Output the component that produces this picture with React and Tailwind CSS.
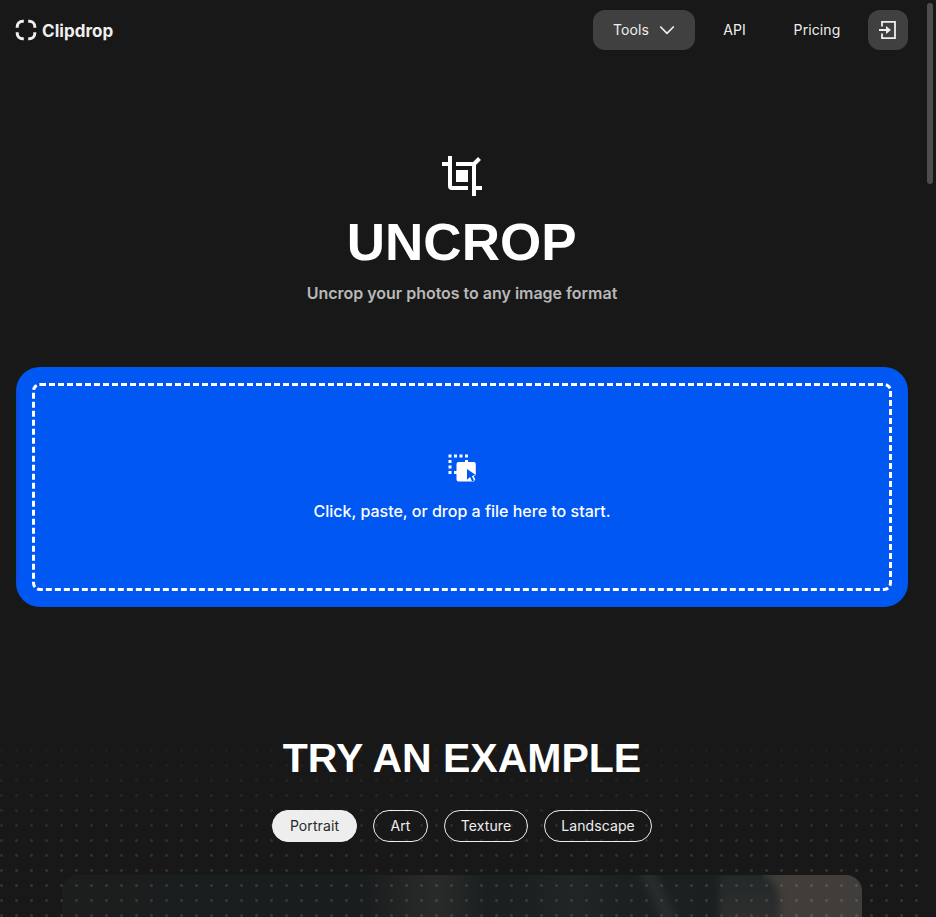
const pills = ['Portrait', 'Art', 'Texture', 'Landscape'];
const pillWidths = ['w-[85px]', 'w-[55px]', 'w-[84px]', 'w-[108px]'];

function Logo() {
  return (
    <svg width="22" height="22" viewBox="0 0 22 22" fill="none" stroke="#f0f0f0" strokeWidth="3">
      <path d="M2.2 8.8V7.7a5.5 5.5 0 0 1 5.5-5.5h1.1M13.2 2.2h1.1a5.5 5.5 0 0 1 5.5 5.5v1.1M19.8 13.2v1.1a5.5 5.5 0 0 1-5.5 5.5h-1.1M8.8 19.8H7.7a5.5 5.5 0 0 1-5.5-5.5v-1.1" />
    </svg>
  );
}

function Header() {
  return (
    <header className="flex h-[60px] items-center justify-between pl-[15px] pr-4 text-[#eeeeee]">
      <a className="flex items-center gap-[5px] text-[17px] font-bold leading-6">
        <Logo />
        <span className="pt-px tracking-[0.05px]">Clipdrop</span>
      </a>
      <nav className="flex items-center text-sm tracking-[0.1px]">
        <button className="flex h-10 w-[102px] items-center gap-[10px] rounded-xl bg-[#404040] pl-[20px]">
          Tools
          <svg width="16" height="10" viewBox="0 0 16 10" fill="none" stroke="currentColor" strokeWidth="1.7" strokeLinecap="round" strokeLinejoin="round">
            <path d="M1.7 2 8 8.3 14.3 2" />
          </svg>
        </button>
        <a className="w-[79px] text-center">API</a>
        <a className="w-[86px] text-center">Pricing</a>
        <button className="ml-2 flex size-10 items-center justify-center rounded-xl bg-[#404040]">
          <svg width="20" height="20" viewBox="0 0 20 20" fill="none" stroke="currentColor" strokeWidth="1.8">
            <path d="M4 6.5V1.9h13v16.2H4v-4.6M1 10h8" />
            <path d="m8 6 5 4-5 4z" fill="currentColor" stroke="none" />
          </svg>
        </button>
      </nav>
    </header>
  );
}

function UncropIcon() {
  return (
    <svg width="40" height="40" viewBox="0 0 40 40" fill="none" stroke="white" strokeWidth="4">
      <path d="M0 8h10M8 0v30q0 2 2 2h16M14 8h20M32 6v34M30 32h10" />
      <path d="m32 8 5.5-5.5" />
      <path d="M14 14h12v12H14z" fill="white" stroke="none" />
    </svg>
  );
}

function DropIcon() {
  return (
    <svg width="28" height="28" viewBox="0 0 28 28" fill="white">
      <path d="M.5.5h3v3h-3zM6 .5h3v3H6zM11.5.5h3v3h-3zM17 .5h3v3h-3zM.5 6h3v3h-3zM.5 11.5h3v3h-3zM.5 17h3v3h-3zM6 17h3v3H6zM17 6h3v3h-3z" />
      <path d="M10.5 8h15.3q2 0 2 2v11l-2 1.5 1.5 3-1.5 2H10.5q-2 0-2-2V10q0-2 2-2z" />
      <path d="m19 15 8.8 6-4 1 2.2 4.4-1.8 1-2.2-4.4-3 2.7z" fill="#0057f2" />
    </svg>
  );
}

function ExamplePreview() {
  return (
    <div className="relative mx-auto mt-[33px] h-[42px] w-[800px] overflow-hidden rounded-t-2xl bg-[linear-gradient(90deg,#1b1e1d_0%,#1a1d1e_38%,#252726_44%,#292b2a_47%,#1b1f20_53%,#1b2021_58%,#202525_64%,#1b2021_70%,#1a1f20_100%)]">
      <div className="absolute left-[590px] -top-3 h-16 w-3 -rotate-[25deg] bg-[#2a2e2d] blur-[5px]" />
      <div className="absolute left-[700px] -top-2 h-16 w-[130px] bg-[#403d3a]" />
      <div className="absolute left-[658px] -top-1 h-16 w-[58px] rounded-tr-[30px] bg-[linear-gradient(180deg,#222828,#303130)] shadow-[0_0_6px_#292c2c] blur-[3px]" />
    </div>
  );
}

export default function App() {
  return (
    <div className="relative h-[917px] w-[936px] overflow-hidden bg-[#181818] font-['Inter','Liberation_Sans',sans-serif] text-white">
      <div className="w-[924px]">
        <Header />
        <main>
          <section className="flex flex-col items-center pt-24">
            <UncropIcon />
            <h1 className="mt-4 scale-x-[1.02] font-['Liberation_Sans',sans-serif] text-[52px] font-bold leading-[60px]">UNCROP</h1>
            <p className="mt-[9px] text-base font-semibold leading-6 tracking-[-0.02px] text-[#b8b8b8]">Uncrop your photos to any image format</p>
          </section>
          <section className="relative mx-4 mt-[62px] h-60 rounded-[24px] bg-[#0057f2] p-4">
            <div className="absolute -left-[2px] top-6 h-[192px] w-[6px] bg-[linear-gradient(90deg,#05230f_0px,#05230f_2px,#1a43df_2px,#0057f2_6px)]" />
            <div className="flex h-full flex-col items-center rounded-lg border-[3px] border-dashed border-white pt-[68px]">
              <DropIcon />
              <p className="mt-[17px] text-base font-medium leading-6">Click, paste, or drop a file here to start.</p>
            </div>
          </section>
          <section className="mt-[127px]">
            <h2 className="text-center font-['Liberation_Sans',sans-serif] text-[41px] font-bold leading-[48px]">TRY AN EXAMPLE</h2>
            <div className="mt-7 flex justify-center gap-4">
              {pills.map((name, i) => (
                <button key={name} className={`h-8 rounded-full border text-sm tracking-[0.1px] ${pillWidths[i]} ${i === 0 ? 'border-[#eeeeee] bg-[#eeeeee] text-[#282828]' : 'border-[#eeeeee] text-[#eeeeee]'}`}>
                  {name}
                </button>
              ))}
            </div>
            <ExamplePreview />
          </section>
        </main>
      </div>
      <div className="pointer-events-none absolute bottom-0 left-0 h-[174px] w-[924px] bg-[radial-gradient(circle_at_1.5px_7.5px,#ffffff1f_1px,transparent_1.8px)] bg-[size:15px_15px] [mask-image:linear-gradient(#0003,black_75%)]" />
      <div className="absolute right-[3px] top-[3px] h-[181px] w-[6px] rounded-full bg-[#4d4d4d]" />
    </div>
  );
}
